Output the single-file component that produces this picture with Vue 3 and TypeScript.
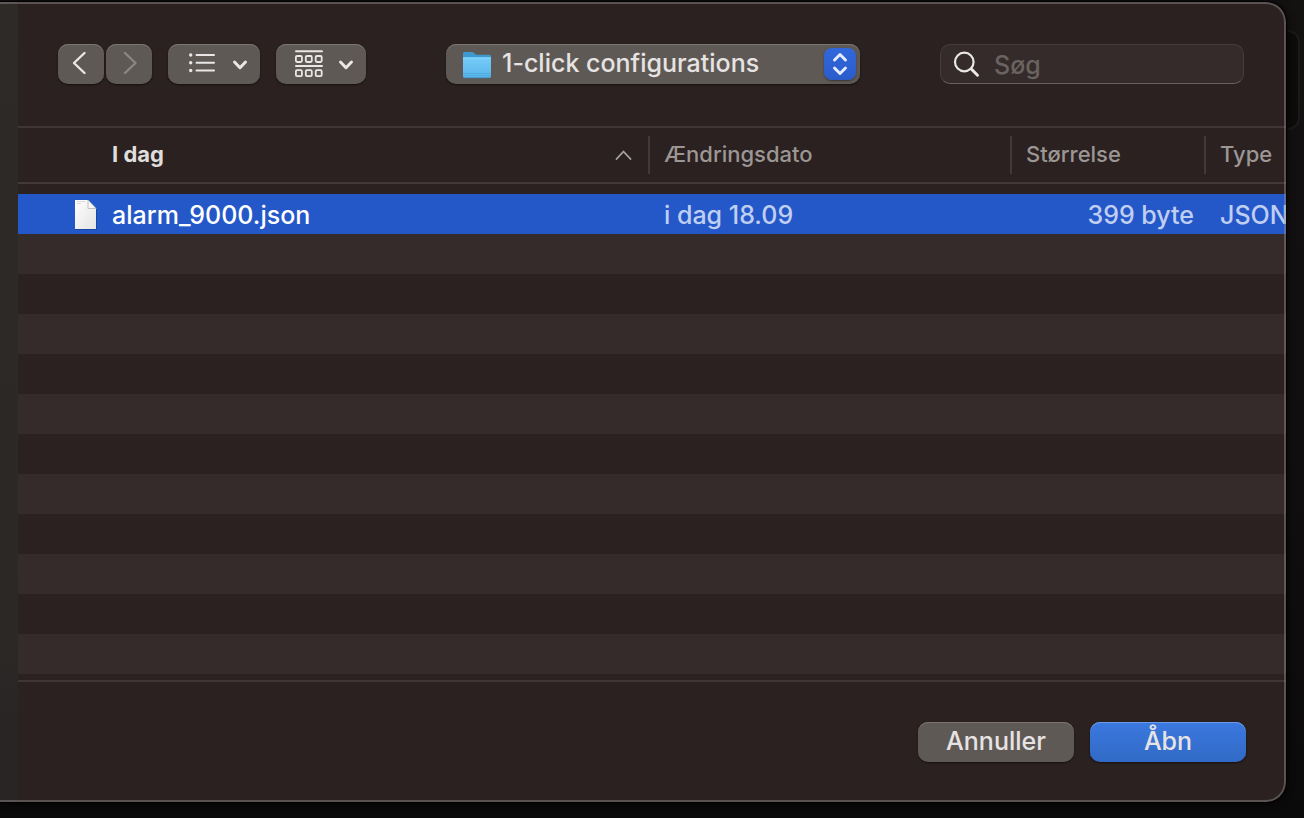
<script setup lang="ts">
import { ref } from 'vue'

interface FileEntry {
  name: string
  modified: string
  size: string
  kind: string
}

const folders: string[] = ['1-click configurations']
const folder = ref(folders[0])
const query = ref('')
const files: FileEntry[] = [
  { name: 'alarm_9000.json', modified: 'i dag 18.09', size: '399 byte', kind: 'JSON' },
]
const selected = ref(files[0].name)
</script>

<template>
  <div class="desktop">
    <div class="behind"></div>
    <main class="dialog">
      <aside class="sidebar"></aside>
      <section class="content">
        <header class="toolbar">
          <div class="tools">
            <div class="nav">
              <button class="btn nav-btn" type="button" aria-label="Tilbage">
                <svg width="46" height="40" viewBox="0 0 46 40" fill="none" stroke="#e9e7e6" stroke-width="2.4" stroke-linecap="round" stroke-linejoin="round"><path d="M26.500 9 16 19l10.500 10" /></svg>
              </button>
              <button class="btn nav-btn" type="button" aria-label="Frem" disabled>
                <svg width="46" height="40" viewBox="0 0 46 40" fill="none" stroke="#8b8683" stroke-width="2.4" stroke-linecap="round" stroke-linejoin="round"><path d="M19 9l10.500 10L19 29" /></svg>
              </button>
            </div>
            <button class="btn list-btn" type="button" aria-label="Listevisning" aria-haspopup="menu">
              <svg width="92" height="40" viewBox="0 0 92 40" fill="none" stroke="#e9e7e6" stroke-linecap="round" stroke-linejoin="round">
                <path stroke-width="2" d="M28.500 11h17.500M28.500 18.700h17.500M28.500 26.500h17.500" />
                <g fill="#e9e7e6" stroke="none"><circle cx="22.700" cy="11" r="1.700" /><circle cx="22.700" cy="18.700" r="1.700" /><circle cx="22.700" cy="26.500" r="1.700" /></g>
                <path stroke-width="3" d="M66.500 18l5.500 5.700L77.500 18" />
              </svg>
            </button>
            <button class="btn group-btn" type="button" aria-label="Gruppér" aria-haspopup="menu">
              <svg width="90" height="40" viewBox="0 0 90 40" fill="none" stroke="#e9e7e6" stroke-linecap="round" stroke-linejoin="round">
                <path stroke-width="2" d="M20 7.200h26M20 21.900h26" />
                <g stroke-width="1.800">
                  <rect x="19.900" y="12" width="6" height="6" rx="1.200" /><rect x="29.800" y="12" width="6" height="6" rx="1.200" /><rect x="39.700" y="12" width="6" height="6" rx="1.200" />
                  <rect x="19.900" y="26.200" width="6" height="6" rx="1.200" /><rect x="29.800" y="26.200" width="6" height="6" rx="1.200" /><rect x="39.700" y="26.200" width="6" height="6" rx="1.200" />
                </g>
                <path stroke-width="3" d="M64.500 18l5.500 5.700L75.500 18" />
              </svg>
            </button>
          </div>

          <div class="folder">
            <svg class="folder-icon" width="32" height="30" viewBox="0 0 32 30" aria-hidden="true">
              <defs>
                <linearGradient id="folderFront" x1="0" y1="0" x2="0" y2="1"><stop offset="0" stop-color="#75cbf8" /><stop offset="1" stop-color="#5bb6ea" /></linearGradient>
              </defs>
              <path d="M2 3.500Q2 2 3.500 2H11q1 0 1.800.8L14 4q.7.700 1.700.700H28.500Q30 4.700 30 6.200V12H2z" fill="#3e99cf" />
              <path d="M2 7.500h28V26q0 2-1.500 2h-25Q2 28 2 26z" fill="url(#folderFront)" />
              <path d="M2 8h28" stroke="#8fdcff" />
              <path d="M2 23.500h28M2 25.500h28" stroke="#4ba7dc" stroke-width=".8" />
              <path d="M3 27.700h26" stroke="#3f94c8" />
            </svg>
            <select v-model="folder" aria-label="Mappe">
              <option v-for="f in folders" :key="f" :value="f">{{ f }}</option>
            </select>
            <svg class="stepper" width="32" height="32" viewBox="0 0 32 32" fill="none" stroke="#e4ebfa" stroke-width="3" stroke-linecap="round" stroke-linejoin="round" aria-hidden="true">
              <path d="M10.500 12l5.500-5.500 5.500 5.500M10.500 20l5.500 5.500 5.500-5.500" />
            </svg>
          </div>

          <label class="search">
            <svg width="28" height="28" viewBox="0 0 28 28" fill="none" stroke="#e9e7e6" stroke-linecap="round" aria-hidden="true">
              <circle cx="11.300" cy="12" r="9.300" stroke-width="2.200" /><path d="M18.200 18.900l6.300 6.300" stroke-width="2.900" />
            </svg>
            <input v-model="query" type="text" placeholder="Søg" aria-label="Søg" />
          </label>
        </header>

        <div class="list">
          <table>
            <colgroup><col /><col class="c-date" /><col class="c-size" /><col class="c-kind" /></colgroup>
            <thead>
              <tr>
                <th class="name" scope="col" aria-sort="ascending">
                  <div class="head">
                    <span>I dag</span>
                    <svg width="18" height="12" viewBox="0 0 18 12" fill="none" stroke="#aaa5a3" stroke-width="1.800" stroke-linecap="round" stroke-linejoin="round" aria-hidden="true"><path d="M2.500 11l7-7.500 7 7.500" /></svg>
                  </div>
                </th>
                <th scope="col"><div class="head split">Ændringsdato</div></th>
                <th scope="col"><div class="head split">Størrelse</div></th>
                <th scope="col"><div class="head split">Type</div></th>
              </tr>
            </thead>
            <tbody>
              <tr v-for="file in files" :key="file.name" :class="{ selected: file.name === selected }" @click="selected = file.name">
                <td>
                  <div class="file">
                    <svg width="26" height="34" viewBox="0 0 26 34" aria-hidden="true">
                      <defs><linearGradient id="paper" x1="0" y1="0" x2="1" y2="1"><stop offset="0" stop-color="#fff" /><stop offset="1" stop-color="#e3e3e3" /></linearGradient></defs>
                      <path d="M2 3h14l8 8.500V32H2z" fill="#173f96" opacity=".7" />
                      <path d="M2 2h13l8 8.500V31H2z" fill="url(#paper)" />
                      <path d="M15 2v8.500h8z" fill="#f7f7f7" stroke="#b5b5b5" stroke-width=".8" />
                      <path d="M4 3.500h8M4 5.500h4" stroke="#d2d2d2" stroke-width=".8" />
                    </svg>
                    <span>{{ file.name }}</span>
                  </div>
                </td>
                <td class="meta">{{ file.modified }}</td>
                <td class="meta size">{{ file.size }}</td>
                <td class="meta">{{ file.kind }}</td>
              </tr>
            </tbody>
          </table>
        </div>

        <footer class="actions">
          <button class="btn action" type="button">Annuller</button>
          <button class="btn action primary" type="button">Åbn</button>
        </footer>
      </section>
    </main>
  </div>
</template>

<style>
body {
  margin: 0;
  background: #0b0a0a;
}
</style>

<style scoped>
* {
  box-sizing: border-box;
}
.desktop {
  position: relative;
  height: 100vh;
  padding: 2px 18px 16px 0;
  overflow: hidden;
  background: linear-gradient(#141111, #100e0f 60%, #0b0a0a);
  font-family: Inter, "Liberation Sans", sans-serif;
  font-size: 25px;
  font-weight: 500;
  color: #e6e4e3;
}
.behind {
  position: absolute;
  top: 30px;
  right: 4px;
  width: 60px;
  height: 100px;
  border: 2px solid #1c1919;
  border-radius: 12px;
  background: #0e0c0b;
}
.dialog {
  position: relative;
  display: flex;
  height: 100%;
  overflow: hidden;
  border-radius: 0 20px 20px 0;
  background: #2a2120;
  box-shadow: 0 0 0 1px #000, 0 0 8px #000;
}
.dialog::after {
  content: "";
  position: absolute;
  inset: 0;
  border: 2px solid rgba(150, 145, 142, 0.45);
  border-left: 0;
  border-radius: inherit;
  pointer-events: none;
}
.sidebar {
  flex: 0 0 18px;
  background: linear-gradient(#2d2a28, #2b2826 80%, #292525 90%);
}
.content {
  flex: 1;
  min-width: 0;
  display: flex;
  flex-direction: column;
}
.toolbar {
  flex: 0 0 126px;
  display: flex;
  align-items: center;
  justify-content: space-between;
  padding: 0 42px 0 40px;
  border-bottom: 2px solid #3f3635;
}
.tools {
  display: flex;
  gap: 16px;
}
.nav {
  display: flex;
  gap: 2px;
}
.btn {
  height: 40px;
  padding: 0;
  border: 0;
  border-radius: 10px;
  background: #5f5956;
  box-shadow: inset 0 1px 0 #7b7673, 0 1px 2px rgba(0, 0, 0, 0.5);
  color: #e6e4e3;
  font: inherit;
}
.btn svg {
  display: block;
}
.nav-btn {
  width: 46px;
}
.list-btn {
  width: 92px;
}
.group-btn {
  width: 90px;
}
.folder {
  position: relative;
  width: 414px;
}
.folder select {
  display: block;
  width: 100%;
  height: 40px;
  padding: 0 44px 2px 56px;
  border: 0;
  border-radius: 10px;
  appearance: none;
  background: #5f5956;
  box-shadow: inset 0 1px 0 #7b7673, 0 1px 2px rgba(0, 0, 0, 0.5);
  color: #e6e4e3;
  font: inherit;
}
.folder-icon {
  position: absolute;
  top: 6px;
  left: 15px;
  pointer-events: none;
}
.stepper {
  position: absolute;
  top: 4px;
  right: 4px;
  border-radius: 8px;
  background: linear-gradient(#3168dc, #2a5bca);
  box-shadow: 0 1px 2px rgba(0, 0, 0, 0.4);
  pointer-events: none;
}
.search {
  display: flex;
  align-items: center;
  gap: 13px;
  width: 304px;
  height: 40px;
  padding: 0 12px;
  border: 1px solid #453d3b;
  border-bottom-color: #67605d;
  border-radius: 10px;
  background: #342b2a;
}
.search svg {
  flex: none;
}
.search input {
  flex: 1;
  min-width: 0;
  padding: 2px 0 0;
  border: 0;
  outline: 0;
  background: none;
  color: #e6e4e3;
  font: inherit;
}
.search input::placeholder {
  color: #6a6361;
  opacity: 1;
}
.list {
  flex: 1;
  min-height: 0;
  overflow: hidden;
  background: repeating-linear-gradient(#2a2120 0 40px, #342b2a 40px 80px) 0 66px no-repeat;
}
table {
  width: 100%;
  table-layout: fixed;
  border-collapse: separate;
  border-spacing: 0;
}
.c-date {
  width: 362px;
}
.c-size {
  width: 194px;
}
.c-kind {
  width: 82px;
}
th {
  height: 56px;
  padding: 0;
  border-bottom: 2px solid #423938;
  color: #9c9694;
  font-size: 22px;
  font-weight: 500;
  text-align: left;
}
th.name {
  color: #e0dedc;
  font-weight: 700;
}
.head {
  display: flex;
  align-items: center;
  justify-content: space-between;
  height: 38px;
  padding: 0 16px 2px 94px;
}
.head.split {
  padding-left: 14px;
  padding-right: 0;
  border-left: 2px solid #423938;
}
tbody::before {
  content: "";
  display: block;
  height: 10px;
}
td {
  height: 40px;
  padding: 2px 0 0 16px;
  white-space: nowrap;
}
td:first-child {
  padding-left: 55px;
}
.selected {
  background: #2458c9;
}
.selected td {
  color: #fff;
}
.selected .meta {
  color: #c0cff1;
}
td.size {
  padding-right: 10px;
  text-align: right;
}
.file {
  display: flex;
  align-items: center;
  gap: 13px;
}
.actions {
  flex: 0 0 122px;
  display: flex;
  align-items: center;
  justify-content: flex-end;
  gap: 16px;
  padding: 0 40px 0 0;
  border-top: 2px solid #3f3635;
}
.action {
  width: 156px;
  padding-bottom: 2px;
}
.primary {
  background: linear-gradient(#3b78e0, #316ac5);
  box-shadow: inset 0 1px 0 #6c9bea, 0 1px 2px rgba(0, 0, 0, 0.5);
}
</style>
